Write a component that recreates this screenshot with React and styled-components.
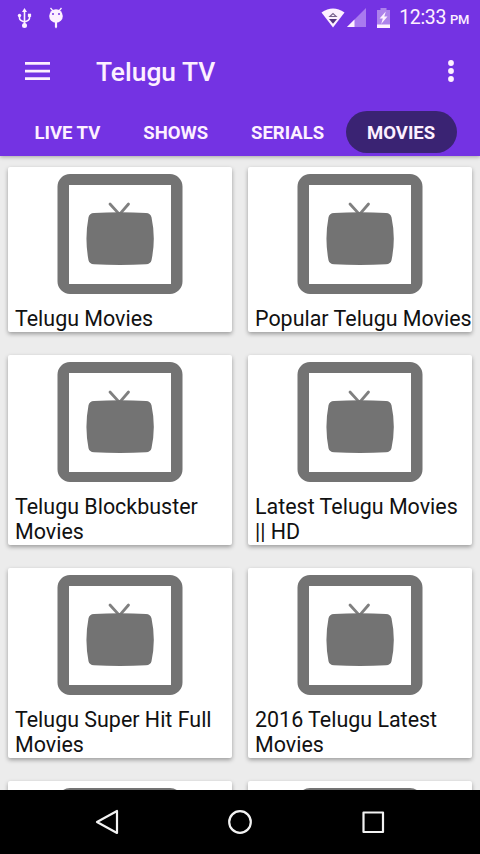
import { useState } from 'react';
import styled, { createGlobalStyle } from 'styled-components';

const GlobalStyle = createGlobalStyle`
  * {
    box-sizing: border-box;
  }

  body {
    margin: 0;
    background-color: #000;
    font-family: Roboto, 'Noto Sans', sans-serif;
  }
`;

const Screen = styled.div`
  display: flex;
  flex-direction: column;
  width: 480px;
  height: 854px;
  overflow: hidden;
  background-color: #ececec;
`;

const Header = styled.header`
  flex: none;
  height: 156px;
  background-color: #7433e3;
  color: #fdf0ff;
  box-shadow: 0 1px 4px rgba(0, 0, 0, 0.3);
  z-index: 1;
`;

const StatusBar = styled.div`
  display: flex;
  align-items: center;
  justify-content: space-between;
  height: 35px;
  padding: 0 11px 0 17px;
`;

const StatusGroup = styled.div`
  display: flex;
  align-items: center;
`;

const StatusIcon = styled.svg`
  display: block;
  margin-left: ${(props) => props.$gap || 0}px;
`;

const Clock = styled.span`
  margin-left: 9px;
  padding-top: 2px;
  font-size: 19.5px;
  letter-spacing: -0.35px;
  line-height: 33px;
  white-space: nowrap;
`;

const Meridiem = styled.span`
  margin-left: 4px;
  font-size: 13px;
  font-weight: 500;
`;

const Toolbar = styled.div`
  display: flex;
  align-items: center;
  height: 71px;
  padding: 0 20px 0 25px;
`;

const IconButton = styled.button`
  display: block;
  padding: 0;
  border: none;
  background: none;
  color: inherit;
  cursor: pointer;

  svg {
    display: block;
  }
`;

const Title = styled.h1`
  flex: 1;
  margin: 2px 0 0 46px;
  font-size: 26.4px;
  font-weight: 500;
  line-height: 36px;
`;

const Tabs = styled.nav`
  display: flex;
  padding: 5px 0 0 13px;
`;

const Tab = styled.button`
  height: 42px;
  padding: 1px 21.5px 0;
  border: none;
  border-radius: 21px;
  background-color: ${(props) => (props.$active ? '#3a2373' : 'transparent')};
  color: inherit;
  font-family: inherit;
  font-size: 18.5px;
  font-weight: 700;
  white-space: nowrap;
  cursor: pointer;
`;

const Content = styled.main`
  flex: 1;
  min-height: 0;
  overflow: hidden;
  padding: 11px 8px 0;
`;

const Grid = styled.div`
  display: grid;
  grid-template-columns: 224px 224px;
  gap: 23px 16px;
`;

const Card = styled.article`
  min-height: 165px;
  padding-bottom: 0.6px;
  background-color: #fff;
  border-radius: 2px;
  box-shadow: 0 2px 4px rgba(0, 0, 0, 0.34);
`;

const Thumb = styled.svg`
  display: block;
  width: 126px;
  height: 120px;
  margin: 0 auto;
`;

const ThumbBox = styled.div`
  height: 139px;
  padding-top: 7px;
`;

const CardTitle = styled.h2`
  margin: 0;
  padding-left: 7px;
  color: #111;
  font-size: 21.45px;
  font-weight: 400;
  line-height: 25.2px;
  white-space: pre;
`;

const NavBar = styled.footer`
  display: flex;
  flex: none;
  align-items: center;
  justify-content: center;
  gap: 109px;
  height: 64px;
  background-color: #000;
  color: #f2f2f2;
  z-index: 1;
`;

const tabs = ['LIVE TV', 'SHOWS', 'SERIALS', 'MOVIES'];

const playlists = [
  { id: 1, name: 'Telugu Movies' },
  { id: 2, name: 'Popular Telugu Movies' },
  { id: 3, name: 'Telugu Blockbuster\nMovies' },
  { id: 4, name: 'Latest Telugu Movies\n|| HD' },
  { id: 5, name: 'Telugu Super Hit Full\nMovies' },
  { id: 6, name: '2016 Telugu Latest\nMovies' },
  { id: 7 },
  { id: 8 },
];

function UsbIcon() {
  return (
    <StatusIcon width="15" height="22" viewBox="0 0 15 22" fill="none" stroke="currentColor" strokeWidth="1.6">
      <path d="M7.5 3v14M2.5 8v3q0 2.5 5 4M12.5 8v3q0 2.5-5 4" />
      <path d="M7.5 1l2.5 4H5z" fill="currentColor" stroke="none" />
      <circle cx="2.5" cy="8.5" r="1.7" fill="currentColor" stroke="none" />
      <path d="M10.9 6.7h3.2v3.2h-3.2z" fill="currentColor" stroke="none" />
      <circle cx="7.5" cy="18.4" r="2.5" fill="currentColor" stroke="none" />
    </StatusIcon>
  );
}

function DebugIcon() {
  return (
    <StatusIcon $gap={16} width="16" height="22" viewBox="0 0 16 22">
      <path d="M2.5 1l2.5 3M13.5 1l-2.5 3" stroke="currentColor" strokeWidth="1.3" />
      <ellipse cx="8" cy="9" rx="6.8" ry="6.8" fill="currentColor" />
      <path d="M6.9 14h2.2v6L8 21.5 6.9 20z" fill="currentColor" />
      <circle cx="5" cy="7" r="1" fill="#7433e3" />
      <circle cx="11" cy="7" r="1" fill="#7433e3" />
    </StatusIcon>
  );
}

function WifiIcon() {
  return (
    <StatusIcon width="24" height="20" viewBox="0 0 24 20">
      <path d="M.5 4.5Q12-3.5 23.5 4.5L12 19.5z" fill="currentColor" />
      <path d="M8.8 8.5L12 5.5l3.2 3z" fill="none" stroke="#79628f" strokeWidth="1.1" />
      <path d="M8 11h8l-4 4.8z" fill="#55347f" />
    </StatusIcon>
  );
}

function SignalIcon() {
  return (
    <StatusIcon $gap={2} width="19" height="19" viewBox="0 0 19 19">
      <path d="M0 19L19 0v19z" fill="#a97aef" />
      <path d="M0 19l7.5-7.5V19z" fill="currentColor" />
    </StatusIcon>
  );
}

function BatteryIcon() {
  return (
    <StatusIcon $gap={11} width="13" height="20" viewBox="0 0 13 20">
      <path d="M0 2h3.5V0h6v2H13v18H0z" fill="#ad82eb" />
      <path d="M0 16.5h13V20H0z" fill="currentColor" />
      <path d="M8.8 3.5L2.6 10.6h3.2L4.2 16 10.5 8.6H7.3z" fill="currentColor" />
    </StatusIcon>
  );
}

function TvThumb() {
  return (
    <ThumbBox>
      <Thumb viewBox="0 0 126 120">
        <path
          fillRule="evenodd"
          fill="#737373"
          d="M13 0h100a12.5 12.5 0 0 1 12.5 12.5v95a12.5 12.5 0 0 1-12.5 12.5H13a12.5 12.5 0 0 1-12.5-12.5v-95A12.5 12.5 0 0 1 13 0zM12 11v99h102V11z"
        />
        <path d="M53 30l9.5 10.5L71.5 30" fill="none" stroke="#808080" strokeWidth="2.8" strokeLinecap="round" />
        <path
          fill="#737373"
          d="M37 39q26-1.4 52 0 4.5.3 5.5 4.2 4.6 21.5 0 43-.9 3.7-5.5 4-26 1.4-52 0-4.6-.3-5.5-4-4.1-21.5 0-43 .9-3.9 5.5-4.2z"
        />
      </Thumb>
    </ThumbBox>
  );
}

function App() {
  const [activeTab, setActiveTab] = useState('MOVIES');

  return (
    <Screen>
      <GlobalStyle />
      <Header>
        <StatusBar>
          <StatusGroup>
            <UsbIcon />
            <DebugIcon />
          </StatusGroup>
          <StatusGroup>
            <WifiIcon />
            <SignalIcon />
            <BatteryIcon />
            <Clock>
              12:33<Meridiem>PM</Meridiem>
            </Clock>
          </StatusGroup>
        </StatusBar>
        <Toolbar>
          <IconButton aria-label="Menu">
            <svg width="25" height="18" viewBox="0 0 25 18" fill="currentColor">
              <path d="M0 0h25v2.7H0zM0 7.7h25v2.7H0zM0 15.3h25V18H0z" />
            </svg>
          </IconButton>
          <Title>Telugu TV</Title>
          <IconButton aria-label="More options">
            <svg width="18" height="24" viewBox="0 0 18 24" fill="currentColor">
              <circle cx="9" cy="4" r="2.9" />
              <circle cx="9" cy="12" r="2.9" />
              <circle cx="9" cy="20" r="2.9" />
            </svg>
          </IconButton>
        </Toolbar>
        <Tabs>
          {tabs.map((tab) => (
            <Tab key={tab} $active={tab === activeTab} onClick={() => setActiveTab(tab)}>
              {tab}
            </Tab>
          ))}
        </Tabs>
      </Header>
      <Content>
        <Grid>
          {playlists.map(({ id, name }) => (
            <Card key={id}>
              <TvThumb />
              {name && <CardTitle>{name}</CardTitle>}
            </Card>
          ))}
        </Grid>
      </Content>
      <NavBar>
        <IconButton aria-label="Back">
          <svg width="24" height="26" viewBox="0 0 24 26" fill="none" stroke="currentColor" strokeWidth="2.2" strokeLinejoin="round">
            <path d="M22 2v22L2 13z" />
          </svg>
        </IconButton>
        <IconButton aria-label="Home">
          <svg width="24" height="24" viewBox="0 0 24 24" fill="none" stroke="currentColor" strokeWidth="2.2">
            <circle cx="12" cy="12" r="10.8" />
          </svg>
        </IconButton>
        <IconButton aria-label="Recent apps">
          <svg width="24" height="24" viewBox="0 0 24 24" fill="none" stroke="currentColor" strokeWidth="2.2" strokeLinejoin="round">
            <path d="M2.5 2.5H22V22H2.5z" />
          </svg>
        </IconButton>
      </NavBar>
    </Screen>
  );
}

export default App;
